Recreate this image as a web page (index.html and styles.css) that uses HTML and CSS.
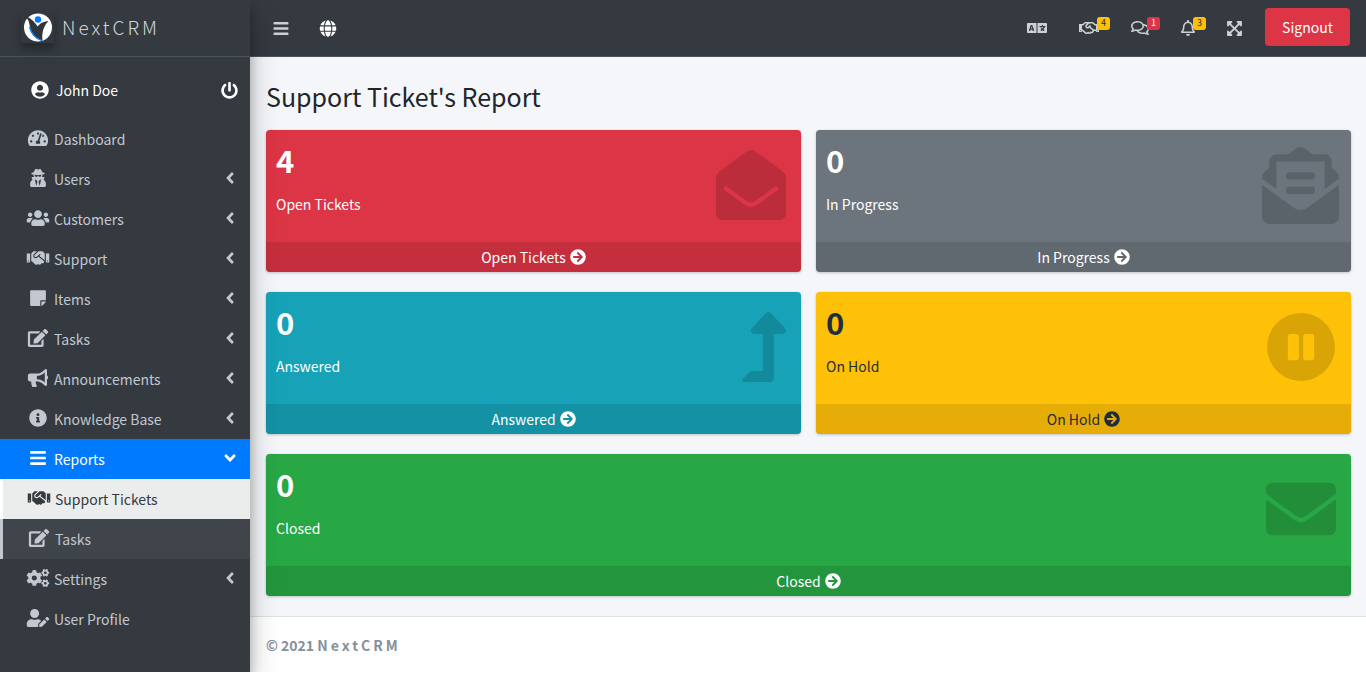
FILE: index.html
```html
<!DOCTYPE html>
<html lang="en">
<head>
<meta charset="utf-8">
<meta name="viewport" content="width=device-width, initial-scale=1">
<title>NextCRM - Support Ticket's Report</title>
<link rel="stylesheet" href="styles.css">
</head>
<body>
<svg class="sprite" aria-hidden="true">
  <symbol id="bars" viewBox="0 0 448 512"><path d="M16 132h416c8.837 0 16-7.163 16-16V76c0-8.837-7.163-16-16-16H16C7.163 60 0 67.163 0 76v40c0 8.837 7.163 16 16 16zm0 160h416c8.837 0 16-7.163 16-16v-40c0-8.837-7.163-16-16-16H16c-8.837 0-16 7.163-16 16v40c0 8.837 7.163 16 16 16zm0 160h416c8.837 0 16-7.163 16-16v-40c0-8.837-7.163-16-16-16H16c-8.837 0-16 7.163-16 16v40c0 8.837 7.163 16 16 16z"/></symbol>
  <symbol id="globe" viewBox="0 0 496 512"><path d="M336.5 160C322 70.7 287.8 8 248 8s-74 62.7-88.5 152h177zM152 256c0 22.2 1.2 43.5 3.3 64h185.3c2.1-20.5 3.3-41.8 3.3-64s-1.2-43.5-3.3-64H155.3c-2.1 20.5-3.3 41.8-3.3 64zm324.7-96c-28.6-67.9-86.5-120.4-158-141.6 24.4 33.8 41.2 84.7 50 141.6h108zM177.2 18.4C105.8 39.6 47.8 92.1 19.3 160h108c8.7-56.9 25.5-107.8 49.9-141.6zM487.4 192H372.7c2.1 21 3.3 42.5 3.3 64s-1.2 43-3.3 64h114.6c5.5-20.5 8.6-41.8 8.6-64s-3.1-43.5-8.5-64zM120 256c0-21.5 1.2-43 3.3-64H8.6C3.2 212.5 0 233.8 0 256s3.2 43.5 8.6 64h114.6c-2-21-3.2-42.5-3.2-64zm39.5 96c14.5 89.3 48.7 152 88.5 152s74-62.7 88.5-152h-177zm159.3 141.6c71.4-21.2 129.4-73.7 158-141.6h-108c-8.8 56.9-25.6 107.8-50 141.6zM19.3 352c28.6 67.9 86.5 120.4 158 141.6-24.4-33.8-41.2-84.7-50-141.6h-108z"/></symbol>
  <symbol id="user-circle" viewBox="0 0 496 512"><path d="M248 8C111 8 0 119 0 256s111 248 248 248 248-111 248-248S385 8 248 8zm0 96c48.6 0 88 39.4 88 88s-39.4 88-88 88-88-39.4-88-88 39.4-88 88-88zm0 344c-58.7 0-111.3-26.6-146.5-68.2 18.8-35.4 55.6-59.8 98.5-59.8 2.4 0 4.8.4 7.1 1.1 13 4.2 26.6 6.9 40.9 6.9 14.3 0 28-2.7 40.9-6.9 2.3-.7 4.7-1.1 7.1-1.1 42.9 0 79.7 24.4 98.5 59.8C359.3 421.4 306.7 448 248 448z"/></symbol>
  <symbol id="power" viewBox="0 0 512 512"><path d="M400 54.1c63 45 104 118.6 104 201.9 0 136.8-110.8 247.7-247.5 248C120 504.3 8.2 393 8 256.4 7.9 173.1 48.9 99.3 111.8 54.2c11.7-8.3 28-4.8 35 7.7L162.6 90c5.9 10.5 3.1 23.8-6.6 31-41.5 30.8-68 79.6-68 134.9-.1 92.3 74.5 168.1 168 168.1 91.6 0 168.6-74.2 168-169.1-.3-51.8-24.7-101.8-68.1-134-9.7-7.2-12.4-20.5-6.5-30.9l15.8-28.1c7-12.4 23.2-16.1 34.8-7.8zM296 264V24c0-13.3-10.7-24-24-24h-32c-13.3 0-24 10.7-24 24v240c0 13.3 10.7 24 24 24h32c13.3 0 24-10.7 24-24z"/></symbol>
  <symbol id="dashboard" viewBox="0 0 576 512"><path d="M288 32C128.94 32 0 160.94 0 320c0 52.8 14.25 102.26 39.06 144.8 5.61 9.62 16.3 15.2 27.44 15.2h443c11.14 0 21.83-5.58 27.44-15.2C561.75 422.26 576 372.8 576 320c0-159.06-128.94-288-288-288zm0 64c14.71 0 26.58 10.13 30.32 23.65-1.11 2.26-2.64 4.23-3.45 6.67l-9.22 27.67c-5.13 3.49-10.97 6.01-17.64 6.01-17.67 0-32-14.33-32-32S270.33 96 288 96zM96 384c-17.67 0-32-14.33-32-32s14.33-32 32-32 32 14.33 32 32-14.33 32-32 32zm48-160c-17.67 0-32-14.33-32-32s14.33-32 32-32 32 14.33 32 32-14.33 32-32 32zm246.77-72.41l-61.33 184C343.13 347.33 352 364.54 352 384c0 11.72-3.38 22.55-8.88 32H232.88c-5.5-9.45-8.88-20.28-8.88-32 0-33.94 26.5-61.43 59.9-63.59l61.34-184.01c4.17-12.56 17.73-19.45 30.36-15.17 12.57 4.19 19.35 17.79 15.17 30.36zm14.66 57.2l15.52-46.55c3.47-1.29 7.13-2.23 11.05-2.23 17.67 0 32 14.33 32 32s-14.33 32-32 32c-11.38-.01-20.89-6.28-26.57-15.22zM480 384c-17.67 0-32-14.33-32-32s14.33-32 32-32 32 14.33 32 32-14.33 32-32 32z"/></symbol>
  <symbol id="user-secret" viewBox="0 0 448 512"><path d="M383.9 308.3l23.9-62.6c4-10.5-3.7-21.7-15-21.7h-58.5c11-18.9 17.8-40.6 17.8-64v-.3c39.2-7.8 64-19.1 64-31.7 0-13.3-27.3-25.1-70.1-33-9.2-32.8-27-65.8-40.6-82.8-9.5-11.9-25.9-15.6-39.5-8.8l-27.6 13.8c-9 4.5-19.6 4.5-28.6 0L182.1 3.4c-13.6-6.8-30-3.1-39.5 8.8-13.5 17-31.4 50-40.6 82.8-42.7 7.9-70 19.7-70 33 0 12.6 24.8 23.9 64 31.7v.3c0 23.4 6.8 45.1 17.8 64H56.3c-11.5 0-19.2 11.7-14.7 22.3l25.8 60.2C27.3 329.8 0 372.7 0 422.4v44.8C0 491.9 20.1 512 44.8 512h358.4c24.7 0 44.8-20.1 44.8-44.8v-44.8c0-48.4-25.8-90.4-64.1-114.1zM176 480l-41.6-192 49.6 32 24 40-32 120zm96 0l-32-120 24-40 49.6-32L272 480zm41.7-298.5c-3.9 11.9-7 24.6-16.5 33.4-10.1 9.3-48 22.4-64-25-2.8-8.4-15.4-8.4-18.3 0-17 50.2-56 32.4-64 25-9.5-8.8-12.7-21.5-16.5-33.4-.8-2.5-6.3-5.7-6.3-5.8v-10.8c28.3 3.6 61 5.8 96 5.8s67.7-2.1 96-5.8v10.8c-.1.1-5.6 3.2-6.4 5.8z"/></symbol>
  <symbol id="users" viewBox="0 0 640 512"><path d="M96 224c35.3 0 64-28.7 64-64s-28.7-64-64-64-64 28.7-64 64 28.7 64 64 64zm448 0c35.3 0 64-28.7 64-64s-28.7-64-64-64-64 28.7-64 64 28.7 64 64 64zm32 32h-64c-17.6 0-33.5 7.1-45.1 18.6 40.3 22.1 68.9 62 75.1 109.4h66c17.7 0 32-14.3 32-32v-32c0-35.3-28.7-64-64-64zm-256 0c61.9 0 112-50.1 112-112S381.9 32 320 32 208 82.1 208 144s50.1 112 112 112zm76.8 32h-8.3c-20.8 10-43.9 16-68.5 16s-47.6-6-68.5-16h-8.3C179.6 288 128 339.6 128 403.2V432c0 26.5 21.5 48 48 48h288c26.5 0 48-21.5 48-48v-28.8c0-63.6-51.6-115.2-115.2-115.2zm-223.7-13.4C161.5 263.1 145.6 256 128 256H64c-35.3 0-64 28.7-64 64v32c0 17.7 14.3 32 32 32h65.9c6.3-47.4 34.9-87.3 75.2-109.4z"/></symbol>
  <symbol id="handshake" viewBox="0 0 640 512"><path d="M434.7 64h-85.9c-8 0-15.7 3-21.6 8.4l-98.3 90c-.1.1-.2.3-.3.4-16.6 15.6-16.3 40.5-2.1 56 12.7 13.9 39.4 17.6 56.1 2.7.1-.1.3-.1.4-.2l79.9-73.2c6.5-5.9 16.7-5.5 22.6 1 6 6.5 5.5 16.6-1 22.6l-26.1 23.9L504 313.8c2.9 2.4 5.5 5 7.9 7.7V128l-54.6-54.6c-5.9-6-14.1-9.4-22.6-9.4zM544 128.2v223.9c0 17.7 14.3 32 32 32h64V128.2h-96zm48 223.9c-8.8 0-16-7.2-16-16s7.2-16 16-16 16 7.2 16 16-7.2 16-16 16zM0 384h64c17.7 0 32-14.3 32-32V128.2H0V384zm48-63.9c8.8 0 16 7.2 16 16s-7.2 16-16 16-16-7.2-16-16c0-8.9 7.2-16 16-16zm435.9 18.6L334.6 217.5l-30 27.5c-29.7 27.1-75.2 24.5-101.7-4.4-26.9-29.4-24.8-74.9 4.4-101.7L289.1 64h-83.8c-8.5 0-16.6 3.4-22.6 9.4L128 128v223.9h18.3l90.5 81.9c27.4 22.3 67.7 18.1 90-9.3l.2-.2 17.9 15.5c15.9 13 39.4 10.5 52.3-5.4l31.4-38.6 5.4 4.4c13.7 11.1 33.9 9.1 45-4.7l9.5-11.7c11.2-13.8 9.1-33.9-4.6-45.1z"/></symbol>
  <symbol id="handshake-o" viewBox="0 0 640 512"><path d="M519.2 127.9l-47.6-47.6A56.252 56.252 0 0 0 432 64H205.2c-14.8 0-29.1 5.9-39.6 16.3L118 127.9H0v255.7h64c17.6 0 31.8-14.2 31.9-31.7h9.1l84.6 76.4c30.9 25.1 73.8 25.7 105.6 3.8 12.5 10.8 26 15.9 41.1 15.9 18.2 0 35.3-7.4 48.8-24 22.1 8.7 48.2 2.6 64-16.8l26.2-32.3c5.6-6.9 9.1-14.8 10.9-23h57.9c.1 17.5 14.4 31.7 31.9 31.7h64V127.9H519.2zM48 351.6c-8.8 0-16-7.2-16-16s7.2-16 16-16 16 7.2 16 16c0 8.9-7.2 16-16 16zm390-6.9l-26.1 32.2c-2.8 3.4-7.8 4-11.3 1.2l-23.9-19.4-30 36.5c-6 7.3-15 4.8-18 2.4l-36.8-31.5-15.6 19.2c-13.9 17.1-39.2 19.7-55.3 6.6l-97.3-88H96V175.8h41.9l61.7-61.6c2-.8 3.7-1.5 5.7-2.3H262l-38.7 35.5c-29.4 26.9-31.1 72.3-4.4 101.3 14.8 16.2 61.2 41.2 101.5 4.4l8.2-7.5 108.2 87.8c3.4 2.8 3.9 7.9 1.2 11.3zm106-40.8h-69.2c-2.3-2.8-4.9-5.4-7.7-7.7l-102.7-83.4 12.5-11.4c6.5-6 7-16.1 1-22.6L367 167.1c-6-6.5-16.1-6.9-22.6-1l-55.2 50.6c-9.5 8.7-25.7 9.4-34.6 0-9.3-9.9-8.5-25.1 1.2-33.9l65.6-60.1c7.4-6.8 17-10.5 27-10.5l83.7-.2c2.1 0 4.1.8 5.5 2.3l61.7 61.6H544v128zm48 47.7c-8.8 0-16-7.2-16-16s7.2-16 16-16 16 7.2 16 16c0 8.9-7.2 16-16 16z"/></symbol>
  <symbol id="note" viewBox="0 0 448 512"><path d="M312 320h136V56c0-13.3-10.7-24-24-24H24C10.7 32 0 42.7 0 56v400c0 13.3 10.7 24 24 24h264V344c0-13.2 10.8-24 24-24zm129 55l-98 98c-4.5 4.5-10.6 7-17 7h-6V352h128v6.1c0 6.3-2.5 12.4-7 16.9z"/></symbol>
  <symbol id="edit" viewBox="0 0 576 512"><path d="M402.6 83.2l90.2 90.2c3.8 3.8 3.8 10 0 13.8L274.4 405.6l-92.8 10.3c-12.4 1.4-22.9-9.1-21.5-21.5l10.3-92.8L388.8 83.2c3.8-3.8 10-3.8 13.8 0zm162-22.9l-48.8-48.8c-15.2-15.2-39.9-15.2-55.2 0l-35.4 35.4c-3.8 3.8-3.8 10 0 13.8l90.2 90.2c3.8 3.8 10 3.8 13.8 0l35.4-35.4c15.2-15.3 15.2-40 0-55.2zM384 346.2V448H64V128h229.8c3.2 0 6.2-1.3 8.5-3.5l40-40c7.6-7.6 2.2-20.5-8.5-20.5H48C21.5 64 0 85.5 0 112v352c0 26.5 21.5 48 48 48h352c26.5 0 48-21.5 48-48V306.2c0-10.7-12.9-16-20.5-8.5l-40 40c-2.2 2.3-3.5 5.3-3.5 8.5z"/></symbol>
  <symbol id="bullhorn" viewBox="0 0 576 512"><path d="M576 240c0-23.63-12.95-44.04-32-55.12V32.01C544 23.26 537.02 0 512 0c-7.12 0-14.19 2.38-19.98 7.02l-85.03 68.03C364.28 109.19 310.66 128 256 128H64c-35.35 0-64 28.65-64 64v96c0 35.35 28.65 64 64 64h33.7c-1.39 10.48-2.18 21.14-2.18 32 0 39.77 9.26 77.35 25.56 110.94 5.19 10.69 16.52 17.06 28.4 17.06h74.28c26.05 0 41.69-29.84 25.9-50.56-16.4-21.52-26.15-48.36-26.15-77.44 0-11.11 1.62-21.79 4.41-32H256c54.66 0 108.28 18.81 150.98 52.95l85.03 68.03a32.023 32.023 0 0 0 19.98 7.02c24.92 0 32-22.78 32-32V295.13C563.05 284.04 576 263.63 576 240zm-96 141.42l-33.05-26.44C392.95 311.78 325.12 288 256 288v-96c69.12 0 136.95-23.78 190.95-66.98L480 98.58v282.84z"/></symbol>
  <symbol id="info" viewBox="0 0 512 512"><path d="M256 8C119.043 8 8 119.083 8 256c0 136.997 111.043 248 248 248s248-111.003 248-248C504 119.083 392.957 8 256 8zm0 110c23.196 0 42 18.804 42 42s-18.804 42-42 42-42-18.804-42-42 18.804-42 42-42zm56 254c0 6.627-5.373 12-12 12h-88c-6.627 0-12-5.373-12-12v-24c0-6.627 5.373-12 12-12h12v-64h-12c-6.627 0-12-5.373-12-12v-24c0-6.627 5.373-12 12-12h64c6.627 0 12 5.373 12 12v100h12c6.627 0 12 5.373 12 12v24z"/></symbol>
  <symbol id="cogs" viewBox="0 0 640 512"><path d="M512.1 191l-8.2 14.3c-3 5.3-9.4 7.5-15.1 5.4-11.8-4.4-22.6-10.7-32.1-18.6-4.6-3.8-5.8-10.5-2.8-15.7l8.2-14.3c-6.9-8-12.3-17.3-15.9-27.4h-16.5c-6 0-11.2-4.3-12.2-10.3-2-12-2.1-24.6 0-37.1 1-6 6.2-10.4 12.2-10.4h16.5c3.6-10.1 9-19.4 15.9-27.4l-8.2-14.3c-3-5.2-1.9-11.9 2.8-15.7 9.5-7.9 20.4-14.2 32.1-18.6 5.7-2.1 12.1.1 15.1 5.4l8.2 14.3c10.5-1.9 21.2-1.9 31.7 0L552 6.3c3-5.3 9.4-7.5 15.1-5.4 11.8 4.4 22.6 10.7 32.1 18.6 4.6 3.8 5.8 10.5 2.8 15.7l-8.2 14.3c6.9 8 12.3 17.3 15.9 27.4h16.5c6 0 11.2 4.3 12.2 10.3 2 12 2.1 24.6 0 37.1-1 6-6.2 10.4-12.2 10.4h-16.5c-3.6 10.1-9 19.4-15.9 27.4l8.2 14.3c3 5.2 1.9 11.9-2.8 15.7-9.5 7.9-20.4 14.2-32.1 18.6-5.7 2.1-12.1-.1-15.1-5.4l-8.2-14.3c-10.4 1.9-21.2 1.9-31.7 0zm-10.5-58.8c38.5 29.6 82.4-14.3 52.8-52.8-38.5-29.7-82.4 14.3-52.8 52.8zM386.3 286.1l33.7 16.8c10.1 5.8 14.5 18.1 10.5 29.1-8.9 24.2-26.4 46.4-42.6 65.8-7.4 8.9-20.2 11.1-30.3 5.3l-29.1-16.8c-16 13.7-34.6 24.6-54.9 31.7v33.6c0 11.6-8.3 21.6-19.7 23.6-24.6 4.2-50.4 4.4-75.9 0-11.5-2-20-11.9-20-23.6V418c-20.3-7.2-38.9-18-54.9-31.7L74 403c-10 5.8-22.9 3.6-30.3-5.3-16.2-19.4-33.3-41.6-42.2-65.7-4-10.9.4-23.2 10.5-29.1l33.3-16.8c-3.9-20.9-3.9-42.4 0-63.4L12 205.8c-10.1-5.8-14.6-18.1-10.5-29 8.9-24.2 26-46.4 42.2-65.8 7.4-8.9 20.2-11.1 30.3-5.3l29.1 16.8c16-13.7 34.6-24.6 54.9-31.7V57.1c0-11.5 8.2-21.5 19.6-23.5 24.6-4.2 50.5-4.4 76-.1 11.5 2 20 11.9 20 23.6v33.6c20.3 7.2 38.9 18 54.9 31.7l29.1-16.8c10-5.8 22.9-3.6 30.3 5.3 16.2 19.4 33.2 41.6 42.1 65.8 4 10.9.1 23.2-10 29.1l-33.7 16.8c3.9 21 3.9 42.5 0 63.5zm-117.6 21.1c59.2-77-28.7-164.9-105.7-105.7-59.2 77 28.7 164.9 105.7 105.7zm243.4 182.7l-8.2 14.3c-3 5.3-9.4 7.5-15.1 5.4-11.8-4.4-22.6-10.7-32.1-18.6-4.6-3.8-5.8-10.5-2.8-15.7l8.2-14.3c-6.9-8-12.3-17.3-15.9-27.4h-16.5c-6 0-11.2-4.3-12.2-10.3-2-12-2.1-24.6 0-37.1 1-6 6.2-10.4 12.2-10.4h16.5c3.6-10.1 9-19.4 15.9-27.4l-8.2-14.3c-3-5.2-1.9-11.9 2.8-15.7 9.5-7.9 20.4-14.2 32.1-18.6 5.7-2.1 12.1.1 15.1 5.4l8.2 14.3c10.5-1.9 21.2-1.9 31.7 0l8.2-14.3c3-5.3 9.4-7.5 15.1-5.4 11.8 4.4 22.6 10.7 32.1 18.6 4.6 3.8 5.8 10.5 2.8 15.7l-8.2 14.3c6.9 8 12.3 17.3 15.9 27.4h16.5c6 0 11.2 4.3 12.2 10.3 2 12 2.1 24.6 0 37.1-1 6-6.2 10.4-12.2 10.4h-16.5c-3.6 10.1-9 19.4-15.9 27.4l8.2 14.3c3 5.2 1.9 11.9-2.8 15.7-9.5 7.9-20.4 14.2-32.1 18.6-5.7 2.1-12.1-.1-15.1-5.4l-8.2-14.3c-10.4 1.9-21.2 1.9-31.7 0zM501.6 431c38.5 29.6 82.4-14.3 52.8-52.8-38.5-29.6-82.4 14.3-52.8 52.8z"/></symbol>
  <symbol id="user-edit" viewBox="0 0 640 512"><path d="M224 256c70.7 0 128-57.3 128-128S294.7 0 224 0 96 57.3 96 128s57.3 128 128 128zm89.6 32h-16.7c-22.2 10.2-46.9 16-72.9 16s-50.6-5.8-72.9-16h-16.7C60.2 288 0 348.2 0 422.4V464c0 26.5 21.5 48 48 48h274.9c-2.4-6.8-3.4-14-2.6-21.3l6.8-60.9 1.2-11.1 7.9-7.9 77.3-77.3c-24.5-27.7-60-45.5-99.9-45.5zm45.3 145.3l-6.8 61c-1.1 10.2 7.5 18.8 17.6 17.6l60.9-6.8 137.9-137.9-71.7-71.7-137.9 137.8zM633 268.9L595.1 231c-9.3-9.3-24.5-9.3-33.8 0l-37.8 37.8-4.1 4.1 71.8 71.7 41.8-41.8c9.3-9.4 9.3-24.5 0-33.9z"/></symbol>
  <symbol id="angle" viewBox="0 0 256 512"><path d="M31.7 239l136-136c9.4-9.4 24.6-9.4 33.9 0l22.6 22.6c9.4 9.4 9.4 24.6 0 33.9L127.9 256l96.4 96.4c9.4 9.4 9.4 24.6 0 33.9L201.7 409c-9.4 9.4-24.6 9.4-33.9 0l-136-136c-9.5-9.4-9.5-24.6-.1-34z"/></symbol>
  <symbol id="language" viewBox="0 0 640 512"><path d="M152.1 236.2c-3.5-12.1-7.8-33.2-7.8-33.2h-.5s-4.3 21.1-7.8 33.2l-11.1 37.5H163zM616 96H336v320h280c13.3 0 24-10.7 24-24V120c0-13.3-10.7-24-24-24zm-24 120c0 6.6-5.4 12-12 12h-11.4c-6.9 23.6-21.7 47.4-42.7 69.9 8.4 6.4 17.1 12.5 26.1 18 5.5 3.4 7.3 10.5 4.1 16.2l-7.9 13.9c-3.4 5.9-10.9 7.8-16.7 4.3-12.6-7.8-24.5-16.1-35.4-24.9-10.9 8.7-22.7 17.1-35.4 24.9-5.8 3.5-13.3 1.6-16.7-4.3l-7.9-13.9c-3.2-5.6-1.4-12.8 4.2-16.2 9.3-5.7 18-11.7 26.1-18-7.9-8.4-14.9-17-21-25.7-4-5.7-2.2-13.6 3.7-17.1l6.5-3.9 7.3-4.3c5.4-3.2 12.4-1.7 16 3.4 5 7 10.8 14 17.4 20.9 13.5-14.2 23.8-28.9 30-43.2H412c-6.6 0-12-5.4-12-12v-16c0-6.6 5.4-12 12-12h64v-16c0-6.6 5.4-12 12-12h16c6.6 0 12 5.4 12 12v16h64c6.6 0 12 5.4 12 12zM0 120v272c0 13.3 10.7 24 24 24h280V96H24c-13.3 0-24 10.7-24 24zm58.9 216.1L116.4 167c1.7-4.9 6.2-8.1 11.4-8.1h32.5c5.1 0 9.7 3.3 11.4 8.1l57.5 169.1c2.6 7.8-3.1 15.9-11.4 15.9h-22.9a12 12 0 0 1-11.5-8.6l-9.4-31.9h-60.2l-9.1 31.8c-1.5 5.1-6.2 8.7-11.5 8.7H70.3c-8.2 0-14-8.1-11.4-15.9z"/></symbol>
  <symbol id="comments" viewBox="0 0 576 512"><path d="M532 386.2c27.5-27.1 44-61.1 44-98.2 0-80-76.5-146.1-176.2-157.9C368.3 72.5 294.3 32 208 32 93.1 32 0 103.6 0 192c0 37 16.5 71 44 98.2-15.3 30.7-37.3 54.5-37.7 54.9-6.3 6.7-8.1 16.5-4.4 25 3.6 8.5 12 14 21.2 14 53.5 0 96.7-20.2 125.2-38.8 9.2 2.1 18.7 3.7 28.4 4.9C208.1 407.6 281.8 448 368 448c20.8 0 40.8-2.4 59.8-6.8C456.3 459.7 499.4 480 553 480c9.2 0 17.5-5.5 21.2-14 3.6-8.5 1.9-18.3-4.4-25-.4-.3-22.5-24.1-37.8-54.8zm-392.8-92.3L122.1 305c-14.1 9.1-28.5 16.3-43.1 21.4 2.7-4.7 5.4-9.7 8-14.8l15.5-31.1L77.7 256C64.2 242.6 48 220.7 48 192c0-60.7 73.3-112 160-112s160 51.3 160 112-73.3 112-160 112c-16.5 0-33-1.9-49-5.6l-19.8-4.5zM498.3 352l-24.7 24.4 15.5 31.1c2.6 5.1 5.3 10.1 8 14.8-14.6-5.1-29-12.3-43.1-21.4l-17.1-11.1-19.9 4.6c-16 3.7-32.5 5.6-49 5.6-54 0-102.2-20.1-131.3-49.7C338 339.5 416 272.9 416 192c0-3.4-.4-6.7-.7-10C479.7 196.5 528 238.8 528 288c0 28.7-16.2 50.6-29.7 64z"/></symbol>
  <symbol id="bell" viewBox="0 0 448 512"><path d="M439.39 362.29c-19.32-20.76-55.47-51.99-55.47-154.29 0-77.7-54.48-139.9-127.94-155.16V32c0-17.67-14.32-32-31.98-32s-31.98 14.33-31.98 32v20.84C118.56 68.1 64.08 130.3 64.08 208c0 102.3-36.15 133.53-55.47 154.29-6 6.45-8.66 14.16-8.61 21.71.11 16.4 12.98 32 32.1 32h383.8c19.12 0 32-15.6 32.1-32 .05-7.55-2.61-15.27-8.61-21.71zM67.53 368c21.22-27.97 44.42-74.33 44.53-159.42 0-.2-.06-.38-.06-.58 0-61.86 50.14-112 112-112s112 50.14 112 112c0 .2-.06.38-.06.58.11 85.1 23.31 131.46 44.53 159.42H67.53zM224 512c35.32 0 63.97-28.65 63.97-64H160.03c0 35.35 28.65 64 63.97 64z"/></symbol>
  <symbol id="expand" viewBox="0 0 448 512"><path d="M448 344v112a23.94 23.94 0 0 1-24 24H312c-21.39 0-32.09-25.9-17-41l36.2-36.2L224 295.6 116.77 402.9 153 439c15.09 15.1 4.39 41-17 41H24a23.94 23.94 0 0 1-24-24V344c0-21.4 25.89-32.1 41-17l36.19 36.2L184.46 256 77.18 148.7 41 185c-15.1 15.1-41 4.4-41-17V56a23.94 23.94 0 0 1 24-24h112c21.39 0 32.09 25.9 17 41l-36.2 36.2L224 216.4l107.23-107.3L295 73c-15.09-15.1-4.39-41 17-41h112a23.94 23.94 0 0 1 24 24v112c0 21.4-25.89 32.1-41 17l-36.19-36.2L263.54 256l107.28 107.3L407 327.1c15.1-15.2 41-4.5 41 16.9z"/></symbol>
  <symbol id="arrow" viewBox="0 0 512 512"><path d="M256 8c137 0 248 111 248 248S393 504 256 504 8 393 8 256 119 8 256 8zm-28.9 143.6l75.5 72.4H120c-13.3 0-24 10.7-24 24v16c0 13.3 10.7 24 24 24h182.6l-75.5 72.4c-9.7 9.3-9.9 24.8-.4 34.3l11 10.9c9.4 9.4 24.6 9.4 33.9 0L404.3 273c9.4-9.4 9.4-24.6 0-33.9L271.6 106.3c-9.4-9.4-24.6-9.4-33.9 0l-11 10.9c-9.5 9.6-9.3 25.1.4 34.4z"/></symbol>
  <symbol id="mail-open" viewBox="0 0 512 512"><path d="M512 464c0 26.51-21.49 48-48 48H48c-26.51 0-48-21.49-48-48V200.724a48 48 0 0 1 18.387-37.776c24.913-19.529 45.501-35.365 164.2-121.511C199.412 29.17 232.797-.347 256 .003c23.198-.354 56.596 29.172 73.413 41.433 118.687 86.137 139.303 101.995 164.2 121.512A48 48 0 0 1 512 200.724V464zm-65.666-196.605c-2.563-3.728-7.7-4.595-11.339-1.907-22.845 16.873-55.462 40.705-105.582 77.079-16.825 12.266-50.21 41.781-73.413 41.43-23.211.344-56.559-29.143-73.413-41.43-50.114-36.37-82.734-60.204-105.582-77.079-3.639-2.688-8.776-1.821-11.339 1.907l-9.072 13.196a7.998 7.998 0 0 0 1.839 10.967c22.887 16.899 55.454 40.69 105.303 76.868 20.274 14.781 56.524 47.813 92.264 47.573 35.724.242 71.961-32.771 92.263-47.573 49.85-36.179 82.418-59.97 105.303-76.868a7.998 7.998 0 0 0 1.839-10.967l-9.071-13.196z"/></symbol>
  <symbol id="mail-text" viewBox="0 0 512 512"><path d="M176 216h160c8.84 0 16-7.16 16-16v-16c0-8.84-7.16-16-16-16H176c-8.84 0-16 7.16-16 16v16c0 8.84 7.16 16 16 16zm-16 80c0 8.84 7.16 16 16 16h160c8.84 0 16-7.16 16-16v-16c0-8.84-7.16-16-16-16H176c-8.84 0-16 7.16-16 16v16zm96 121.13c-16.42 0-32.84-5.06-46.86-15.19L0 250.86V464c0 26.51 21.49 48 48 48h416c26.51 0 48-21.49 48-48V250.86L302.86 401.94c-14.02 10.12-30.44 15.19-46.86 15.19zm237.61-254.18c-8.85-6.94-17.24-13.47-29.61-22.81V96c0-26.51-21.49-48-48-48h-77.55c-3.04-2.2-5.87-4.26-9.04-6.56C312.6 29.17 279.2-.35 256 0c-23.2-.35-56.59 29.17-73.41 41.44-3.17 2.3-6 4.36-9.04 6.56H96c-26.51 0-48 21.49-48 48v44.14c-12.37 9.33-20.76 15.87-29.61 22.81A47.995 47.995 0 0 0 0 200.72v10.65l96 69.35V96h320v184.72l96-69.35v-10.65c0-14.74-6.78-28.67-18.39-37.77z"/></symbol>
  <symbol id="level-up" viewBox="0 0 320 512"><path d="M313.553 119.669L209.587 7.666c-9.485-10.214-25.676-10.229-35.174 0L70.438 119.669C56.232 134.969 67.062 160 88.025 160H152v272H68.024a11.996 11.996 0 0 0-8.485 3.515l-56 56C-4.021 499.074 1.333 512 12.024 512H208c13.255 0 24-10.745 24-24V160h63.966c20.878 0 31.851-24.969 17.587-40.331z"/></symbol>
  <symbol id="pause" viewBox="0 0 512 512"><path d="M256 8C119 8 8 119 8 256s111 248 248 248 248-111 248-248S393 8 256 8zm-16 328c0 8.8-7.2 16-16 16h-48c-8.8 0-16-7.2-16-16V176c0-8.8 7.2-16 16-16h48c8.8 0 16 7.2 16 16v160zm112 0c0 8.8-7.2 16-16 16h-48c-8.8 0-16-7.2-16-16V176c0-8.8 7.2-16 16-16h48c8.8 0 16 7.2 16 16v160z"/></symbol>
  <symbol id="mail" viewBox="0 0 512 512"><path d="M502.3 190.8c3.9-3.1 9.7-.2 9.7 4.7V400c0 26.5-21.5 48-48 48H48c-26.5 0-48-21.5-48-48V195.6c0-5 5.7-7.8 9.7-4.7 22.4 17.4 52.1 39.5 154.1 113.6 21.1 15.4 56.7 47.8 92.2 47.6 35.7.3 72-32.8 92.3-47.6 102-74.1 131.6-96.3 154-113.7zM256 320c23.2.4 56.6-29.2 73.4-41.4 132.7-96.3 142.8-104.7 173.4-128.7 5.8-4.5 9.2-11.5 9.2-18.9v-19c0-26.5-21.5-48-48-48H48c-26.5 0-48 21.5-48 48v19c0 7.4 3.4 14.3 9.2 18.9 30.6 23.9 40.7 32.4 173.4 128.7 16.8 12.2 50.2 41.8 73.4 41.4z"/></symbol>
</svg>

<div class="layout">
  <aside class="sidebar">
    <a class="brand" href="#">
      <svg class="logo" viewBox="0 0 33 33" aria-hidden="true">
        <circle cx="17" cy="17.5" r="14" fill="#fff"/>
        <path d="M3 5.5C8 7 13.500 11 16.500 16.500 19 13.500 22 11.500 27.500 11 23 15.500 20.500 22 21.500 30.500 14 28 9.500 22 8.500 14.500 8 10.500 6 7.500 3 5.500Z" fill="#2f353b"/>
        <path d="M8.500 17C10 23 14 28.500 21.500 31" fill="none" stroke="#007bff" stroke-width="1.300"/>
        <circle cx="17" cy="9.500" r="3.200" fill="#007bff"/>
      </svg>
      <span class="brand-name">NextCRM</span>
    </a>
    <div class="user">
      <a class="user-name" href="#"><svg class="icon"><use href="#user-circle"/></svg><span>John Doe</span></a>
      <button class="power" type="button" aria-label="Power off"><svg class="icon"><use href="#power"/></svg></button>
    </div>
    <nav class="menu">
      <a class="item" href="#"><svg class="icon"><use href="#dashboard"/></svg><span>Dashboard</span></a>
      <a class="item" href="#"><svg class="icon"><use href="#user-secret"/></svg><span>Users</span><svg class="caret"><use href="#angle"/></svg></a>
      <a class="item" href="#"><svg class="icon"><use href="#users"/></svg><span>Customers</span><svg class="caret"><use href="#angle"/></svg></a>
      <a class="item" href="#"><svg class="icon"><use href="#handshake"/></svg><span>Support</span><svg class="caret"><use href="#angle"/></svg></a>
      <a class="item" href="#"><svg class="icon"><use href="#note"/></svg><span>Items</span><svg class="caret"><use href="#angle"/></svg></a>
      <a class="item" href="#"><svg class="icon"><use href="#edit"/></svg><span>Tasks</span><svg class="caret"><use href="#angle"/></svg></a>
      <a class="item" href="#"><svg class="icon"><use href="#bullhorn"/></svg><span>Announcements</span><svg class="caret"><use href="#angle"/></svg></a>
      <a class="item" href="#"><svg class="icon"><use href="#info"/></svg><span>Knowledge Base</span><svg class="caret"><use href="#angle"/></svg></a>
      <a class="item open" href="#"><svg class="icon"><use href="#bars"/></svg><span>Reports</span><svg class="caret"><use href="#angle"/></svg></a>
      <a class="item sub current" href="#" aria-current="page"><svg class="icon"><use href="#handshake"/></svg><span>Support Tickets</span></a>
      <a class="item sub" href="#"><svg class="icon"><use href="#edit"/></svg><span>Tasks</span></a>
      <a class="item" href="#"><svg class="icon"><use href="#cogs"/></svg><span>Settings</span><svg class="caret"><use href="#angle"/></svg></a>
      <a class="item" href="#"><svg class="icon"><use href="#user-edit"/></svg><span>User Profile</span></a>
    </nav>
  </aside>

  <div class="page">
    <header class="topbar">
      <button class="tool" type="button" aria-label="Toggle menu"><svg class="icon"><use href="#bars"/></svg></button>
      <button class="tool site" type="button" aria-label="Website"><svg class="icon"><use href="#globe"/></svg></button>
      <div class="tools">
        <button class="tool" type="button" aria-label="Language"><svg class="glyph w-20"><use href="#language"/></svg></button>
        <button class="tool" type="button" aria-label="Tickets"><svg class="glyph w-20"><use href="#handshake-o"/></svg><span class="badge">4</span></button>
        <button class="tool" type="button" aria-label="Messages"><svg class="glyph w-18"><use href="#comments"/></svg><span class="badge red">1</span></button>
        <button class="tool" type="button" aria-label="Notifications"><svg class="glyph w-14"><use href="#bell"/></svg><span class="badge">3</span></button>
        <button class="tool" type="button" aria-label="Full screen"><svg class="glyph w-15"><use href="#expand"/></svg></button>
      </div>
      <button class="signout" type="button">Signout</button>
    </header>

    <main class="content">
      <h1 class="title">Support Ticket's Report</h1>
      <div class="cards">
        <section class="card danger">
          <div class="card-body">
            <div><h2 class="count">4</h2><p class="label">Open Tickets</p></div>
            <svg class="art"><use href="#mail-open"/></svg>
          </div>
          <a class="more" href="#">Open Tickets <svg class="arrow"><use href="#arrow"/></svg></a>
        </section>
        <section class="card secondary">
          <div class="card-body">
            <div><h2 class="count">0</h2><p class="label">In Progress</p></div>
            <svg class="art large"><use href="#mail-text"/></svg>
          </div>
          <a class="more" href="#">In Progress <svg class="arrow"><use href="#arrow"/></svg></a>
        </section>
        <section class="card info">
          <div class="card-body">
            <div><h2 class="count">0</h2><p class="label">Answered</p></div>
            <svg class="art narrow"><use href="#level-up"/></svg>
          </div>
          <a class="more" href="#">Answered <svg class="arrow"><use href="#arrow"/></svg></a>
        </section>
        <section class="card warning">
          <div class="card-body">
            <div><h2 class="count">0</h2><p class="label">On Hold</p></div>
            <svg class="art"><use href="#pause"/></svg>
          </div>
          <a class="more" href="#">On Hold <svg class="arrow"><use href="#arrow"/></svg></a>
        </section>
        <section class="card success wide">
          <div class="card-body">
            <div><h2 class="count">0</h2><p class="label">Closed</p></div>
            <svg class="art"><use href="#mail"/></svg>
          </div>
          <a class="more" href="#">Closed <svg class="arrow"><use href="#arrow"/></svg></a>
        </section>
      </div>
    </main>

    <footer class="footer">© 2021 <span class="footer-name">NextCRM</span></footer>
  </div>
</div>
</body>
</html>
```
FILE: styles.css
```css
* { box-sizing: border-box; }

body {
  margin: 0;
  background: #fff;
  color: #212529;
  font: 14px/24px "Noto Sans CJK SC", "Noto Sans", sans-serif;
}

a { color: inherit; text-decoration: none; }

button {
  border: 0;
  padding: 0;
  background: none;
  color: inherit;
  font: inherit;
  cursor: pointer;
}

svg { display: block; fill: currentColor; }

.sprite { display: none; }

.layout {
  display: flex;
  min-height: calc(100vh - 1px);
}

/* Sidebar */
.sidebar {
  position: relative;
  z-index: 2;
  flex: 0 0 250px;
  background: #343a40;
  color: #c2c7d0;
  box-shadow: 0 14px 28px rgba(0, 0, 0, .25), 0 10px 10px rgba(0, 0, 0, .22);
}

.brand {
  display: flex;
  align-items: center;
  gap: 8px;
  height: 57px;
  padding: 0 21px 3px;
  border-bottom: 1px solid #4b545c;
}

.logo {
  width: 33px;
  height: 33px;
  background: #32383e;
  box-shadow: 0 6px 8px rgba(0, 0, 0, .3);
}

.brand-name {
  color: #d0d4d8;
  font-size: 19px;
  font-weight: 300;
  letter-spacing: 3px;
}

.user {
  display: flex;
  justify-content: space-between;
  align-items: center;
  height: 62px;
  padding: 4px 12px 0 27px;
  color: #fff;
}

.user-name { display: flex; align-items: center; gap: 3px; }

.icon { width: 26px; height: 18px; }

.power .icon { width: 17px; height: 17px; }

.item {
  display: flex;
  align-items: center;
  gap: 3px;
  height: 40px;
  padding: 0 11px 0 25px;
}

.item .icon,
.caret { margin-bottom: 2px; }

.caret {
  width: 18px;
  height: 18px;
  margin-left: auto;
}

.open { background: #007bff; color: #fff; }
.open .caret { transform: rotate(-90deg); }

.sub {
  padding-left: 23px;
  border-left: 3px solid #c2c7d0;
  background: #3f454b;
}

.current {
  border-color: #fff;
  background: #ebeded;
  color: #343a40;
}

/* Main column */
.page {
  display: flex;
  flex: 1;
  flex-direction: column;
  min-width: 0;
}

.topbar {
  display: flex;
  align-items: center;
  height: 57px;
  padding: 0 16px;
  border-bottom: 1px solid #4b545c;
  background: #343a40;
  color: #ced0d2;
}

.tool { position: relative; }
.topbar .icon { width: 30px; height: 17px; }
.site { margin-left: 17px; color: #fff; }

.tools {
  display: flex;
  align-items: center;
  gap: 32px;
  margin-left: auto;
}

.glyph { height: 16px; }
.w-20 { width: 20px; }
.w-18 { width: 18px; }
.w-15 { width: 15px; height: 17px; }
.w-14 { width: 14px; }

.badge {
  position: absolute;
  top: -3px;
  right: -11px;
  width: 13px;
  height: 13px;
  border-radius: 3px;
  background: #ffc107;
  color: #1f2d3d;
  font-size: 9px;
  line-height: 12px;
  text-align: center;
}

.red { background: #dc3545; color: #fff; }

.signout {
  height: 38px;
  margin: 0 0 2px 23px;
  padding: 0 17px;
  border-radius: 4px;
  background: #dc3545;
  color: #fff;
}

.content {
  flex: 1;
  padding: 22px 15px 20px 16px;
  background: #f4f6f9;
}

.title {
  margin: 0 0 17px;
  font-size: 25px;
  font-weight: 400;
  line-height: 34px;
}

.cards {
  display: grid;
  grid-template-columns: 1fr 1fr;
  gap: 20px 15px;
}

.card {
  overflow: hidden;
  border-radius: 4px;
  color: #fff;
  box-shadow: 0 0 1px rgba(0, 0, 0, .13), 0 1px 3px rgba(0, 0, 0, .2);
}

.wide { grid-column: 1 / -1; }

.danger { background: #dc3545; }
.secondary { background: #6c757d; }
.info { background: #17a2b8; }
.warning { background: #ffc107; color: #1f2d3d; }
.success { background: #28a745; }

.card-body {
  display: flex;
  justify-content: space-between;
  height: 112px;
  padding: 10px;
}

.count {
  margin: 0 0 12px;
  font-size: 31px;
  font-weight: 700;
  line-height: 40px;
}

.label { margin: 0; }

.art {
  width: 70px;
  height: 70px;
  margin: 10px 5px 0 0;
  color: rgba(0, 0, 0, .15);
}

.large { width: 77px; height: 77px; margin: 7px 2px 0 0; }
.narrow { width: 44px; }

.more {
  display: flex;
  justify-content: center;
  align-items: center;
  gap: 4px;
  height: 30px;
  background: rgba(0, 0, 0, .1);
}

.arrow { width: 16px; height: 16px; }

.footer {
  padding: 16px 16px 15px;
  border-top: 1px solid #dee2e6;
  background: #fff;
  color: #869099;
  font-weight: 700;
}

.footer-name { letter-spacing: 3px; }
```
